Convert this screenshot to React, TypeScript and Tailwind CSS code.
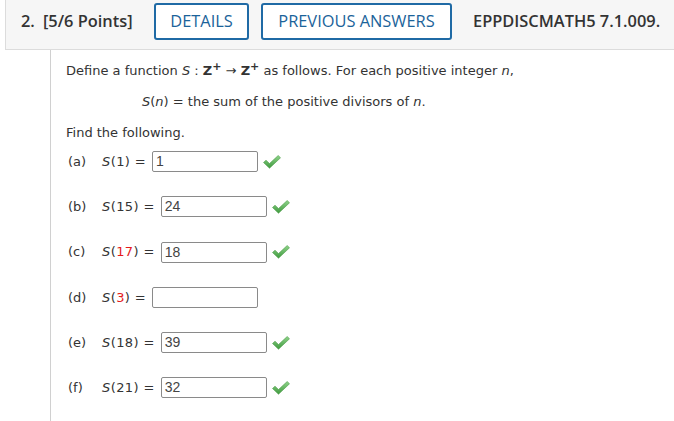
import React from 'react';

const body = { fontFamily: '"DejaVu Sans", Verdana, sans-serif' };

const Check: React.FC = () => (
  <svg width="18" height="14" viewBox="0 0 18 14" className="ml-[5px]">
    <defs>
      <linearGradient id="g" x1="0" y1="0" x2="0" y2="1">
        <stop offset="0" stopColor="#8fd48a" />
        <stop offset="1" stopColor="#3f9a3f" />
      </linearGradient>
    </defs>
    <polygon points="0.5,7.5 3,5.2 6.5,8.6 15.2,0.5 17.5,2.8 6.5,13.2" fill="url(#g)" stroke="#4a9a45" strokeWidth="0.6" />
  </svg>
);

type Row = { tag: string; arg: string; red?: boolean; value: string; ok: boolean };

const rows: Row[] = [
  { tag: 'a', arg: '1', value: '1', ok: true },
  { tag: 'b', arg: '15', value: '24', ok: true },
  { tag: 'c', arg: '17', red: true, value: '18', ok: true },
  { tag: 'd', arg: '3', red: true, value: '', ok: false },
  { tag: 'e', arg: '18', value: '39', ok: true },
  { tag: 'f', arg: '21', value: '32', ok: true },
];

const Zp: React.FC = () => (
  <span className="font-bold not-italic">
    Z<sup className="text-[11px] -top-[5px]">+</sup>
  </span>
);

export default function App() {
  return (
    <div className="w-full h-[421px] bg-white overflow-hidden text-[#333]">
      {/* header */}
      <div
        className="ml-[5px] h-[50px] bg-[#f6f6f6] border-l border-b border-[#dcdcdc] flex items-start pt-[3px]"
        style={{ fontFamily: '"Open Sans", sans-serif' }}
      >
        <div className="w-[148px] h-[37px] flex items-center pl-[15px] text-[16.4px] font-semibold text-[#333]">
          <span>2.</span>
          <span className="ml-[8px]">[5/6 Points]</span>
        </div>
        <button className="h-[37px] w-[95px] border-2 border-[#1f6aa5] rounded-[3px] text-[16.4px] text-[#1b639a] bg-white">
          DETAILS
        </button>
        <button className="ml-[12px] h-[37px] w-[191px] border-2 border-[#1f6aa5] rounded-[3px] text-[16.4px] text-[#1b639a] bg-white">
          PREVIOUS ANSWERS
        </button>
        <div className="h-[37px] flex items-center ml-[21px] text-[16.4px] font-semibold text-[#333] whitespace-nowrap">
          EPPDISCMATH5 7.1.009.
        </div>
      </div>

      {/* body */}
      <div className="ml-[50px] h-[371px] border-l border-[#d0d0d0] pl-[15px] pt-[11px] text-[13px] text-[#333]" style={body}>
        <div className="h-[20px] flex items-center">
          <span>
            Define a function <i>S</i> : <Zp /> &rarr; <Zp /> as follows. For each positive integer <i>n</i>,
          </span>
        </div>
        <div className="h-[20px] flex items-center mt-[11px] pl-[76px]">
          <span>
            <i>S</i>(<i>n</i>) = the sum of the positive divisors of <i>n</i>.
          </span>
        </div>
        <div className="h-[20px] flex items-center mt-[11px]">Find the following.</div>

        <div className="flex flex-col gap-[24.3px] mt-[8px]">
          {rows.map((r) => (
            <div key={r.tag} className="h-[21px] flex items-center">
              <span className="w-[36px] pl-[2px]">({r.tag})</span>
              <span className="tracking-[0.4px]">
                <i>S</i>(<span className={r.red ? 'text-[#e41b1b]' : ''}>{r.arg}</span>) =
              </span>
              <div
                className="ml-[6px] w-[106px] h-[21px] border border-[#8a8a8a] rounded-[2px] flex items-center pl-[3px] text-[14px] text-[#444]"
                style={{ fontFamily: '"Liberation Sans", Arial, sans-serif' }}
              >
                {r.value}
              </div>
              {r.ok && <Check />}
            </div>
          ))}
        </div>
      </div>
    </div>
  );
}
